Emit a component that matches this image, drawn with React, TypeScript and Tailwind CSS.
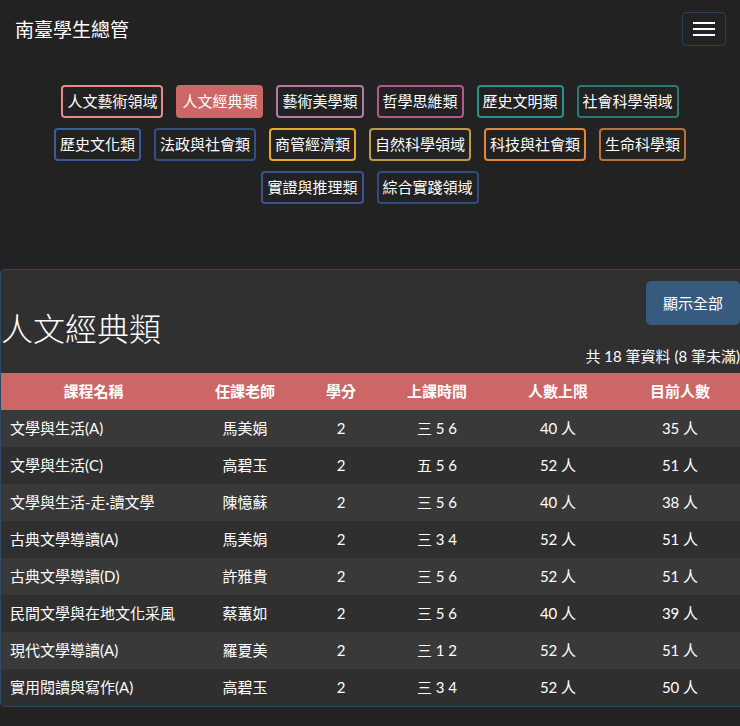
import React from 'react';

interface Category {
  name: string;
  border: string;
  active?: boolean;
}

interface Course {
  name: string;
  teacher: string;
  credit: number;
  time: string;
  limit: number;
  current: number;
}

const categoryRows: Category[][] = [
  [
    { name: '人文藝術領域', border: 'border-[#e88a8a]' },
    { name: '人文經典類', border: 'border-[#cd6666]', active: true },
    { name: '藝術美學類', border: 'border-[#b77aa0]' },
    { name: '哲學思維類', border: 'border-[#b4578a]' },
    { name: '歷史文明類', border: 'border-[#23938c]' },
    { name: '社會科學領域', border: 'border-[#257a72]' },
  ],
  [
    { name: '歷史文化類', border: 'border-[#3b5b9b]' },
    { name: '法政與社會類', border: 'border-[#344f86]' },
    { name: '商管經濟類', border: 'border-[#e6a92b]' },
    { name: '自然科學領域', border: 'border-[#c19a45]' },
    { name: '科技與社會類', border: 'border-[#e58535]' },
    { name: '生命科學類', border: 'border-[#b87238]' },
  ],
  [
    { name: '實證與推理類', border: 'border-[#3a5490]' },
    { name: '綜合實踐領域', border: 'border-[#314b85]' },
  ],
];

const courses: Course[] = [
  { name: '文學與生活(A)', teacher: '馬美娟', credit: 2, time: '三 5 6', limit: 40, current: 35 },
  { name: '文學與生活(C)', teacher: '高碧玉', credit: 2, time: '五 5 6', limit: 52, current: 51 },
  { name: '文學與生活-走·讀文學', teacher: '陳憶蘇', credit: 2, time: '三 5 6', limit: 40, current: 38 },
  { name: '古典文學導讀(A)', teacher: '馬美娟', credit: 2, time: '三 3 4', limit: 52, current: 51 },
  { name: '古典文學導讀(D)', teacher: '許雅貴', credit: 2, time: '三 5 6', limit: 52, current: 51 },
  { name: '民間文學與在地文化采風', teacher: '蔡蕙如', credit: 2, time: '三 5 6', limit: 40, current: 39 },
  { name: '現代文學導讀(A)', teacher: '羅夏美', credit: 2, time: '三 1 2', limit: 52, current: 51 },
  { name: '實用閱讀與寫作(A)', teacher: '高碧玉', credit: 2, time: '三 3 4', limit: 52, current: 50 },
];

const font = "font-['Lato','Noto_Sans_CJK_TC',sans-serif]";

const App: React.FC = () => {
  return (
    <div className={`min-h-[726px] bg-[#222222] text-white ${font}`}>
      {/* Navbar */}
      <nav className="flex items-center justify-between h-[58px] pl-[15px] pr-[14px]">
        <span className="text-[19px] leading-none">南臺學生總管</span>
        <button className="flex flex-col items-center justify-center gap-[4px] w-[44px] h-[34px] border border-[#2b4058] rounded-[4px]">
          <span className="block w-[22px] h-[2px] bg-white"></span>
          <span className="block w-[22px] h-[2px] bg-white"></span>
          <span className="block w-[22px] h-[2px] bg-white"></span>
        </button>
      </nav>

      {/* Category buttons */}
      <div className="flex flex-col items-center gap-[10px] pt-[27px]">
        {categoryRows.map((row, i) => (
          <div key={i} className="flex gap-[13px]">
            {row.map((c) => (
              <button
                key={c.name}
                className={`border-2 ${c.border} rounded-[4px] px-[4px] py-[3px] text-[15px] leading-[23px] ${c.active ? 'bg-[#cd6666]' : ''}`}
              >
                {c.name}
              </button>
            ))}
          </div>
        ))}
      </div>

      {/* Course card */}
      <div className="mt-[65px] bg-[#303030] border-l border-t border-b border-[#2f4a66] rounded-tl-[5px] rounded-bl-[5px]">
        <div className="flex justify-between h-[75px]">
          <h1 className="self-end text-[32px] leading-[32px] font-light">人文經典類</h1>
          <button className="mt-[11px] h-[44px] px-[17px] bg-[#375a7f] rounded-[5px] text-[15px]">顯示全部</button>
        </div>
        <p className="text-right text-[15px] leading-[22px] mb-[6px]">共 18 筆資料 (8 筆未滿)</p>

        <table className="w-full table-fixed border-collapse text-[15px]">
          <colgroup>
            <col className="w-[185px]" />
            <col className="w-[118px]" />
            <col className="w-[74px]" />
            <col className="w-[118px]" />
            <col className="w-[124px]" />
            <col className="w-[120px]" />
          </colgroup>
          <thead>
            <tr className="bg-[#cd6666] h-[37px] font-bold">
              <th className="text-center">課程名稱</th>
              <th className="text-center">任課老師</th>
              <th className="text-center">學分</th>
              <th className="text-center">上課時間</th>
              <th className="text-center">人數上限</th>
              <th className="text-center">目前人數</th>
            </tr>
          </thead>
          <tbody>
            {courses.map((c, i) => (
              <tr key={c.name} className={`h-[37px] ${i % 2 === 0 ? 'bg-[#393939]' : 'bg-[#2f2f2f]'}`}>
                <td className="pl-[9px] whitespace-nowrap">{c.name}</td>
                <td className="text-center">{c.teacher}</td>
                <td className="text-center">{c.credit}</td>
                <td className="text-center">{c.time}</td>
                <td className="text-center">{c.limit} 人</td>
                <td className="text-center">{c.current} 人</td>
              </tr>
            ))}
          </tbody>
        </table>
      </div>
    </div>
  );
};

export default App;
